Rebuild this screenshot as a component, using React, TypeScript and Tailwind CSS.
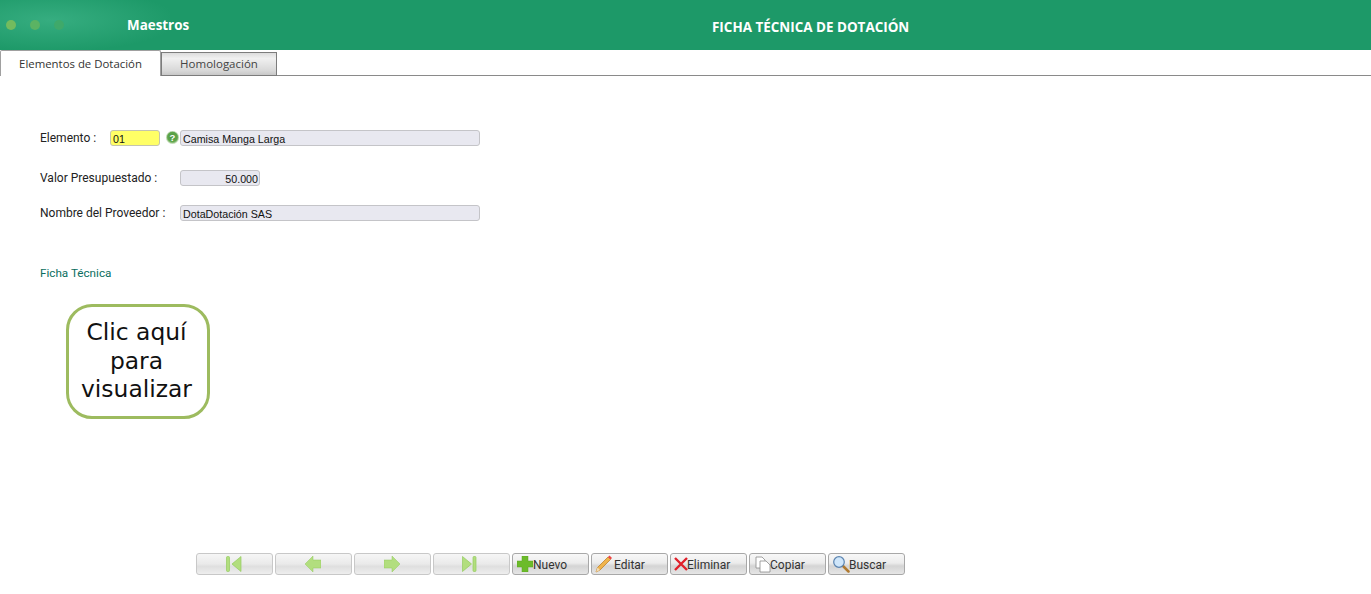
import React from "react";

const seg = "font-['Open_Sans','Noto_Sans',sans-serif]";
const rob = "font-['Roboto','Open_Sans',sans-serif]";

function NavBtn({ children }: { children: React.ReactNode }) {
  return (
    <button className="w-[77px] h-[22px] flex items-center justify-center rounded-[3px] border border-[#c8c8c8] bg-[linear-gradient(#f6f6f6,#eaeaea_50%,#dfdfdf_62%,#eeeeee)]">
      {children}
    </button>
  );
}

function ActBtn({ icon, label }: { icon: React.ReactNode; label: string }) {
  return (
    <button className={`w-[77px] h-[22px] flex items-center pl-[4px] rounded-[3px] border border-[#a8a8a8] bg-[linear-gradient(#f8f8f8,#ececec_45%,#d4d4d4_60%,#e6e6e6)] text-[12px] leading-none text-[#333] ${rob}`}>
      {icon}
      <span className="mt-[1px]">{label}</span>
    </button>
  );
}

const G = "#b2de7e";
const GD = "#93cb5e";

export default function App() {
  return (
    <div className="w-[1371px] h-[594px] bg-white overflow-hidden font-['Liberation_Sans',sans-serif]">
      <header className="relative h-[50px] bg-[#1d9968] flex items-center">
        <div className="absolute left-0 top-0 w-[170px] h-[50px] bg-[radial-gradient(ellipse_at_30%_40%,#36ad80_0%,#1d9968_75%)]" />
        <div className="relative flex items-center gap-[14px] ml-[6px] w-[121px] -mt-[1px]">
          <span className="w-[10px] h-[10px] rounded-full bg-[#73bb5e]" />
          <span className="w-[10px] h-[10px] rounded-full bg-[#5bb363]" />
          <span className="w-[10px] h-[10px] rounded-full bg-[#3fa96a]" />
        </div>
        <div className={`relative text-[13.4px] font-bold text-white w-[140px] ${seg}`}>Maestros</div>
        <div className={`relative text-[13.45px] font-bold text-white ml-[445px] mt-[5px] ${seg}`}>FICHA TÉCNICA DE DOTACIÓN</div>
      </header>

      <div className={`h-[26px] flex items-end border-b border-[#8a8a8a] ${seg}`}>
        <div className="w-[161px] h-[26px] -mb-px bg-white border border-b-0 border-[#a0a0a0] rounded-t-[2px] flex items-center justify-center text-[11.4px] text-[#333] z-10">Elementos de Dotación</div>
        <div className="w-[116px] h-[24px] -mb-px border border-[#7c7c7c] bg-[linear-gradient(#dcdcdc,#f0f0f0_25%,#d8d8d8_80%,#c8c8c8)] flex items-center justify-center text-[11.5px] text-[#444]">Homologación</div>
      </div>

      <main className="pl-[40px] pt-[54px]">
        <div className="flex items-center h-[16px]">
          <label className={`w-[70px] text-[12px] text-[#222] -mt-[1px] ${rob}`}>Elemento :</label>
          <div className="w-[50px] h-[16px] bg-[#ffff66] border border-[#c4c4b0] rounded-[3px] text-[10.7px] leading-[17px] pl-[2px] text-[#111]">01</div>
          <svg className="ml-[6px] mr-[1px] -mt-[1px]" width="13" height="13" viewBox="0 0 13 13">
            <defs>
              <radialGradient id="q" cx="50%" cy="45%" r="55%">
                <stop offset="0%" stopColor="#4f9440" />
                <stop offset="70%" stopColor="#5fa64c" />
                <stop offset="100%" stopColor="#b9d8a8" />
              </radialGradient>
            </defs>
            <circle cx="6.5" cy="6.5" r="6.2" fill="url(#q)" stroke="#c4dcb8" strokeWidth="0.6" />
            <text x="6.5" y="10" textAnchor="middle" fontSize="9.5" fontWeight="700" fill="#fff" fontFamily="Liberation Sans">?</text>
          </svg>
          <div className="w-[300px] h-[16px] bg-[#e8e8f0] border border-[#c4c4c8] rounded-[3px] text-[10.7px] leading-[17px] pl-[2px] text-[#111]">Camisa Manga Larga</div>
        </div>

        <div className="flex items-center h-[16px] mt-[24px]">
          <label className={`w-[140px] text-[12px] text-[#222] -mt-[1px] ${rob}`}>Valor Presupuestado :</label>
          <div className="w-[80px] h-[16px] bg-[#e8e8f0] border border-[#c4c4c8] rounded-[3px] text-[10.7px] leading-[17px] pr-[1px] text-right text-[#111]">50.000</div>
        </div>

        <div className="flex items-center h-[16px] mt-[19px]">
          <label className={`w-[140px] text-[12px] text-[#222] -mt-[1px] ${rob}`}>Nombre del Proveedor :</label>
          <div className="w-[300px] h-[16px] bg-[#e8e8f0] border border-[#c4c4c8] rounded-[3px] text-[10.7px] leading-[17px] pl-[2px] text-[#111]">DotaDotación SAS</div>
        </div>

        <div className={`mt-[44px] h-[16px] text-[11.7px] leading-[16px] text-[#0b6e60] ${rob}`}>Ficha Técnica</div>

        <div className="ml-[26px] mt-[23px] w-[144px] h-[115px] border-[3px] border-[#9dbb5f] rounded-[26px] flex items-center justify-center pr-[3px] text-center text-[23.4px] leading-[28.5px] text-[#111] font-['DejaVu_Sans',sans-serif]">
          <div className="whitespace-nowrap -mt-[1px]">Clic aquí<br />para<br />visualizar</div>
        </div>
      </main>

      <div className="flex gap-[2px] ml-[196px] mt-[134px]">
        <NavBtn>
          <svg className="-ml-[1px]" width="16" height="16" viewBox="0 0 16 16"><rect x="0.5" y="0.5" width="3" height="15" rx="1" fill={G} stroke={GD} strokeWidth="0.7" /><path d="M15 0.5 L15 15.5 L6 8 Z" fill={G} stroke={GD} strokeWidth="0.7" /></svg>
        </NavBtn>
        <NavBtn>
          <svg className="-ml-[2px]" width="16" height="16" viewBox="0 0 16 16"><path d="M8 0 L0 8 L8 16 L8 12 L16 12 L16 4 L8 4 Z" fill={G} stroke={GD} strokeWidth="0.5" /></svg>
        </NavBtn>
        <NavBtn>
          <svg className="-ml-[2px]" width="16" height="16" viewBox="0 0 16 16"><path d="M8 0 L16 8 L8 16 L8 12 L0 12 L0 4 L8 4 Z" fill={G} stroke={GD} strokeWidth="0.5" /></svg>
        </NavBtn>
        <NavBtn>
          <svg className="-ml-[3px]" width="16" height="16" viewBox="0 0 16 16"><path d="M0.5 0.5 L0.5 15.5 L9.5 8 Z" fill={G} stroke={GD} strokeWidth="0.7" /><rect x="11" y="0.5" width="3" height="15" rx="1" fill={G} stroke={GD} strokeWidth="0.7" /></svg>
        </NavBtn>
        <ActBtn
          label="Nuevo"
          icon={<svg width="16" height="16" viewBox="0 0 16 16"><path d="M5 0 H11 V5 H16 V11 H11 V16 H5 V11 H0 V5 H5 Z" fill="#6cbb2a" stroke="#5aa522" strokeWidth="0.5" /></svg>}
        />
        <ActBtn
          label="Editar"
          icon={
            <svg className="-ml-[1px] mr-[2px]" width="17" height="18" viewBox="0 0 17 18">
              <path d="M1 17 L2.5 12.5 L13 2 L15.5 4.5 L5 15 Z" fill="#f0b44c" stroke="#b87a22" strokeWidth="0.7" />
              <path d="M13 2 L14.5 0.5 L17 3 L15.5 4.5 Z" fill="#e44" />
              <path d="M1 17 L2.5 12.5 L5 15 Z" fill="#f3dcb4" />
            </svg>
          }
        />
        <ActBtn
          label="Eliminar"
          icon={<svg className="-ml-[1px] -mr-[1px]" width="14" height="14" viewBox="0 0 14 14"><path d="M1 1 L13 13 M13 1 L1 13" stroke="#e0202a" strokeWidth="2.4" /></svg>}
        />
        <ActBtn
          label="Copiar"
          icon={
            <svg className="ml-[1px] -mr-[1px]" width="16" height="17" viewBox="0 0 16 17" fill="#fff" stroke="#8a8a8a" strokeWidth="0.8">
              <path d="M1 1 H7 L10 4 V12 H1 Z" />
              <path d="M5 5 H11 L15 9 V16 H5 Z" />
            </svg>
          }
        />
        <ActBtn
          label="Buscar"
          icon={
            <svg className="-mr-[1px]" width="17" height="17" viewBox="0 0 17 17">
              <path d="M10 10 L15.5 15.5" stroke="#b07a30" strokeWidth="2.5" strokeLinecap="round" />
              <circle cx="6" cy="6" r="5.3" fill="#cfe6fa" stroke="#5b84b0" strokeWidth="1.2" />
            </svg>
          }
        />
      </div>
    </div>
  );
}
